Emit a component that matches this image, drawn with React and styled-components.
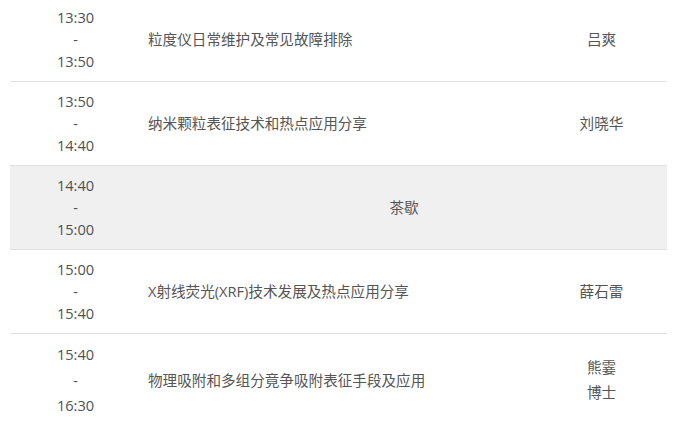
import React from "react"
import styled, { createGlobalStyle } from "styled-components"

const GlobalStyle = createGlobalStyle`
  html, body {
    margin: 0;
    padding: 0;
    background: #fff;
  }
  body {
    font-family: "Open Sans", "Noto Sans CJK SC", sans-serif;
    overflow: hidden;
  }
`

const Wrapper = styled.div`
  margin-top: -2px;
  padding: 0 14px 0 10px;
`

const Schedule = styled.table`
  width: 657px;
  border-collapse: collapse;
  table-layout: fixed;
  font-size: 14.6px;
  color: #555;
`

const Row = styled.tr`
  background: ${(props) => (props.$break ? "#f0f0f0" : "transparent")};
  line-height: ${(props) => props.$lh || 22}px;

  & > td {
    border-bottom: ${(props) => (props.$last ? "none" : "1px solid #e1e1e1")};
  }
`

const Cell = styled.td`
  padding: 8px 7px 9px;
  vertical-align: middle;
  text-align: ${(props) => props.$align || "left"};
`

const TimeCell = styled(Cell)`
  text-align: center;
  color: #505050;
`

const sessions = [
  { start: "13:30", end: "13:50", topic: "粒度仪日常维护及常见故障排除", speaker: ["吕爽"] },
  { start: "13:50", end: "14:40", topic: "纳米颗粒表征技术和热点应用分享", speaker: ["刘晓华"] },
  { start: "14:40", end: "15:00", topic: "茶歇", isBreak: true },
  { start: "15:00", end: "15:40", topic: "X射线荧光(XRF)技术发展及热点应用分享", speaker: ["薛石雷"] },
  { start: "15:40", end: "16:30", topic: "物理吸附和多组分竟争吸附表征手段及应用", speaker: ["熊霎", "博士"], lh: 25.5 },
]

const App = () => {
  return (
    <>
      <GlobalStyle />
      <Wrapper>
        <Schedule>
          <colgroup>
            <col style={{ width: "131px" }} />
            <col style={{ width: "395px" }} />
            <col style={{ width: "131px" }} />
          </colgroup>
          <tbody>
            {sessions.map((s, i) => (
              <Row
                key={s.start}
                $break={s.isBreak}
                $lh={s.lh}
                $last={i === sessions.length - 1}
              >
                <TimeCell>
                  {s.start}
                  <br />-<br />
                  {s.end}
                </TimeCell>
                {s.isBreak ? (
                  <Cell colSpan={2} $align="center">
                    {s.topic}
                  </Cell>
                ) : (
                  <>
                    <Cell>{s.topic}</Cell>
                    <Cell $align="center">
                      {s.speaker.map((name, j) => (
                        <React.Fragment key={name}>
                          {j > 0 && <br />}
                          {name}
                        </React.Fragment>
                      ))}
                    </Cell>
                  </>
                )}
              </Row>
            ))}
          </tbody>
        </Schedule>
      </Wrapper>
    </>
  )
}

export default App
